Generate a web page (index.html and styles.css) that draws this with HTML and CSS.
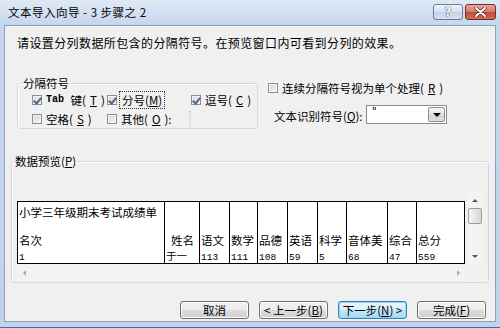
FILE: index.html
```html
<!DOCTYPE html>
<html>
  <head>
    <meta charset="utf-8" />
    <title>文本导入向导</title>
    <link rel="stylesheet" href="styles.css">
  </head>
  <body>
    <div class="window">
      <div class="titlebar">
        <span class="title">文本导入向导 - 3 步骤之 2</span>
        <div class="caption-btns">
          <span class="cap-btn help">?</span>
          <span class="cap-btn close">
            <svg width="13" height="10" viewBox="0 0 13 10">
              <path d="M2 1 L11 9 M11 1 L2 9" stroke="#5a2a22" stroke-width="3.4" stroke-linecap="round" />
              <path d="M2 1 L11 9 M11 1 L2 9" stroke="#fff" stroke-width="2" stroke-linecap="round" />
            </svg>
          </span>
        </div>
      </div>

      <div class="client">
        <p class="intro">请设置分列数据所包含的分隔符号。在预览窗口内可看到分列的效果。</p>

        <div class="options">
          <fieldset class="group delims">
            <legend>分隔符号</legend>
            <div class="delim-grid">
              <label class="chk"><span class="box checked"></span><span class="mono">Tab</span>&nbsp;键(<u>T</u>)</label>
              <label class="chk"><span class="box checked"></span><span class="focus">分号(<u>M</u>)</span></label>
              <label class="chk"><span class="box checked"></span>逗号(<u>C</u>)</label>
              <label class="chk"><span class="box"></span>空格(<u>S</u>)</label>
              <label class="chk"><span class="box"></span>其他(<u>O</u>):<span class="textbox"></span></label>
            </div>
          </fieldset>

          <div class="right-opts">
            <label class="chk"><span class="box"></span>连续分隔符号视为单个处理(<u>R</u>)</label>
            <div class="qualifier">
              <span class="qlabel">文本识别符号(<u>Q</u>):</span>
              <div class="combo">
                <span class="combo-val">"</span>
                <span class="combo-btn"><span class="tri-down"></span></span>
              </div>
            </div>
          </div>
        </div>

        <fieldset class="group preview">
          <legend>数据预览(<u>P</u>)</legend>
          <div class="preview-box">
            <div class="preview-main">
              <div class="sheet-area">
                <table class="sheet">
                  <colgroup>
                    <col class="w147"><col class="w35"><col class="w30"><col class="w28"><col class="w30">
                    <col class="w30"><col class="w29"><col class="w41"><col class="w29"><col class="w48">
                  </colgroup>
                  <tr class="r1">
                    <td>小学三年级期末考试成绩单</td>
                    <td></td><td></td><td></td><td></td><td></td><td></td><td></td><td></td><td></td>
                  </tr>
                  <tr class="r2">
                    <td>名次</td><td class="right">姓名</td><td>语文</td><td>数学</td><td>品德</td>
                    <td>英语</td><td>科学</td><td>音体美</td><td>综合</td><td>总分</td>
                  </tr>
                  <tr class="r3">
                    <td class="num">1</td><td class="name">于一</td><td class="num">113</td><td class="num">111</td>
                    <td class="num">108</td><td class="num">59</td><td class="num">5</td><td class="num">68</td>
                    <td class="num">47</td><td class="num">559</td>
                  </tr>
                </table>
              </div>
              <div class="vscroll">
                <span class="arrow"><span class="tri-up"></span></span>
                <span class="thumb"></span>
                <span class="track"></span>
                <span class="arrow"><span class="tri-down small"></span></span>
              </div>
            </div>
            <div class="hscroll">
              <span class="arrow"><span class="tri-left"></span></span>
              <span class="track"></span>
              <span class="arrow"><span class="tri-right"></span></span>
              <span class="corner"></span>
            </div>
          </div>
        </fieldset>

        <div class="buttons">
          <button class="btn">取消</button>
          <button class="btn">&lt; 上一步(<u>B</u>)</button>
          <button class="btn default">下一步(<u>N</u>) &gt;</button>
          <button class="btn">完成(<u>F</u>)</button>
        </div>
      </div>
    </div>
  </body>
</html>
```

FILE: styles.css
```css
* {
  box-sizing: border-box;
}
html,
body {
  margin: 0;
}
body {
  width: 500px;
  height: 328px;
  overflow: hidden;
  font-family: "Noto Sans CJK SC", "Liberation Sans", sans-serif;
  font-size: 11.5px;
  color: #000;
}
.window {
  width: 500px;
  height: 328px;
  display: flex;
  flex-direction: column;
  background: linear-gradient(#dfe9f5, #c6d7ec 25px, #c1d3ea);
  padding: 0 4px 5px 4px;
  border-bottom: 1px solid #3d6f9a;
}
.titlebar {
  height: 25px;
  display: flex;
  align-items: center;
  justify-content: space-between;
}
.title {
  padding-left: 4px;
  font-size: 11.5px;
  line-height: 14px;
  letter-spacing: 0.5px;
  margin-top: -2px;
}
.caption-btns {
  display: flex;
  gap: 2px;
  margin-top: -2px;
}
.cap-btn {
  width: 30px;
  height: 16px;
  border: 1px solid #6b7a8f;
  border-radius: 3px;
  display: flex;
  align-items: center;
  justify-content: center;
}
.help {
  background: linear-gradient(#eef3f9, #d8e3f0 50%, #c4d4e8 51%, #d4e1f1);
  color: #fff;
  font-family: "DejaVu Sans", sans-serif;
  font-weight: bold;
  font-size: 12px;
  line-height: 12px;
  text-shadow: 0 0 1px #44536a, 0 0 1px #44536a, 0 0 1px #44536a;
}
.close {
  width: 31px;
  border-color: #6e2c24;
  background: linear-gradient(#e8a89c, #d57a69 50%, #c24a37 51%, #cf6e58);
}

.client {
  flex: 1;
  background: #f0f0f0;
  border: 1px solid #8aa1bd;
  display: flex;
  flex-direction: column;
}
.intro {
  margin: 9px 0 0 12px;
  font-size: 12px;
  line-height: 16px;
  letter-spacing: 0.4px;
}

u {
  text-decoration: underline;
  text-underline-offset: 1px;
}

.options {
  display: flex;
  margin-top: 25px;
}
.group {
  margin: 0;
  border: 1px solid #d5d9dd;
  border-radius: 3px;
  box-shadow: inset 1px 1px 0 #fff;
  min-inline-size: 0;
}
.group legend {
  padding: 0 1px;
  line-height: 14px;
}
.delims {
  margin-left: 12px;
  width: 241px;
  padding: 0 0 0 14px;
}
.delims legend {
  margin-left: -10px;
}
.delim-grid {
  display: grid;
  grid-template-columns: 75px 84px 1fr;
  grid-template-rows: 19px 18px;
  row-gap: 1px;
}
.chk {
  display: flex;
  align-items: center;
  gap: 4px;
  white-space: nowrap;
  line-height: 14px;
}
.box {
  flex: none;
  width: 10px;
  height: 10px;
  border: 1px solid #8e8f8f;
  background: linear-gradient(135deg, #d6d6d6, #f6f6f6);
  box-shadow: inset 0 0 0 1px #f4f4f4;
  position: relative;
}
.box.checked::after {
  content: "";
  position: absolute;
  left: 2px;
  top: 0px;
  width: 3px;
  height: 6px;
  border: solid #4a6292;
  border-width: 0 2px 2px 0;
  transform: rotate(40deg);
}
.mono {
  font-family: "Liberation Mono", monospace;
  font-size: 10px;
  font-weight: bold;
}
.focus {
  outline: 1px dotted #333;
  outline-offset: 1px;
  padding: 0 1px;
}
.textbox {
  width: 34px;
  height: 16px;
  margin-left: 13px;
  background: #fff;
  border: 1px solid #abadb3;
  border-color: #abadb3 #dbdfe6 #e3e9ef #e2e3ea;
}

.right-opts {
  margin-left: 10px;
  display: flex;
  flex-direction: column;
}
.right-opts > .chk {
  margin-top: 4px;
  height: 16px;
}
.qualifier {
  display: flex;
  align-items: center;
  margin-top: 9px;
}
.qlabel {
  width: 98px;
  padding-left: 6px;
  padding-top: 3px;
  white-space: nowrap;
}
.combo {
  width: 81px;
  height: 19px;
  border: 1px solid #8b8b8b;
  background: #fff;
  display: flex;
  justify-content: space-between;
}
.combo-val {
  padding: 1px 0 0 5px;
  font-family: "DejaVu Sans", sans-serif;
  font-size: 10px;
  line-height: 10px;
  color: #000;
}
.combo-btn {
  width: 17px;
  margin: 1px;
  border: 1px solid #8d8d8d;
  border-radius: 2px;
  background: linear-gradient(#f4f4f4, #e6e6e6 50%, #d4d4d4 51%, #dedede);
  display: flex;
  align-items: center;
  justify-content: center;
}
.tri-down {
  width: 0;
  height: 0;
  border-left: 4px solid transparent;
  border-right: 4px solid transparent;
  border-top: 4px solid #000;
}
.tri-down.small {
  border-width: 3px 3px 0;
  border-top-color: #555;
}
.tri-up {
  width: 0;
  height: 0;
  border-left: 3px solid transparent;
  border-right: 3px solid transparent;
  border-bottom: 3px solid #555;
}
.tri-left {
  width: 0;
  height: 0;
  border-top: 3px solid transparent;
  border-bottom: 3px solid transparent;
  border-right: 3px solid #a8a8a8;
}
.tri-right {
  width: 0;
  height: 0;
  border-top: 3px solid transparent;
  border-bottom: 3px solid transparent;
  border-left: 3px solid #a8a8a8;
}

.preview {
  margin: 25px 0 0 6px;
  width: 478px;
  padding: 24px 4px 1px 5px;
}
.preview legend {
  margin-left: -3px;
}
.preview-box {
  display: flex;
  flex-direction: column;
}
.preview-main {
  display: flex;
  height: 72px;
}
.sheet-area {
  width: 450px;
  padding-top: 9px;
}
.sheet {
  border-collapse: collapse;
  table-layout: fixed;
  width: 447px;
  background: #fff;
  border: 1px solid #000;
}
.sheet td {
  padding: 0 0 0 1px;
  border-left: 1px solid #000;
  white-space: nowrap;
  overflow: hidden;
  font-size: 11.5px;
  vertical-align: bottom;
}
.w147 { width: 147px; }
.w35 { width: 35px; }
.w30 { width: 30px; }
.w28 { width: 28px; }
.w29 { width: 29px; }
.w41 { width: 41px; }
.w48 { width: 48px; }
.r1 td {
  height: 20px;
  line-height: 20px;
  vertical-align: top;
}
.r2 td {
  height: 27px;
  line-height: 15px;
  padding-bottom: 1px;
}
.r3 td {
  height: 14px;
  line-height: 13px;
}
.sheet td.right {
  text-align: right;
  padding-right: 5px;
}
.sheet td.num {
  font-family: "Liberation Mono", monospace;
  font-size: 9.5px;
  line-height: 11px;
}
.sheet td.name {
  font-size: 10.5px;
  line-height: 13px;
  vertical-align: top;
}

.vscroll {
  width: 16px;
  display: flex;
  flex-direction: column;
  background: #f3f3f3;
}
.vscroll .arrow,
.hscroll .arrow {
  flex: none;
  width: 16px;
  height: 16px;
  display: flex;
  align-items: center;
  justify-content: center;
}
.thumb {
  flex: none;
  height: 16px;
  margin: 0 1px;
  border: 1px solid #9b9b9b;
  border-radius: 2px;
  background: linear-gradient(90deg, #f4f4f4, #e4e4e4 50%, #d6d6d6);
}
.track {
  flex: 1;
}
.hscroll {
  display: flex;
  height: 16px;
  background: #f3f3f3;
  margin-top: 1px;
}
.hscroll .arrow {
  width: 14px;
}
.corner {
  width: 19px;
  background: #f0f0f0;
}

.buttons {
  display: flex;
  justify-content: flex-end;
  gap: 10px;
  margin-top: 18px;
  padding-right: 9px;
}
.btn {
  width: 69px;
  height: 18px;
  padding: 0;
  border: 1px solid #707070;
  border-radius: 3px;
  background: linear-gradient(#f2f2f2, #ebebeb 50%, #dddddd 51%, #cfcfcf);
  box-shadow: inset 0 0 0 1px #fbfbfb;
  font-family: "Noto Sans CJK SC", "Liberation Sans", sans-serif;
  font-size: 11.5px;
  line-height: 14px;
  color: #000;
}
.btn.default {
  border-color: #3c7fb1;
  box-shadow: inset 0 0 0 1px #93d7f4;
  background: linear-gradient(#eaf6fd, #d9f0fc 50%, #bee6fd 51%, #a7d9f5);
}
```
